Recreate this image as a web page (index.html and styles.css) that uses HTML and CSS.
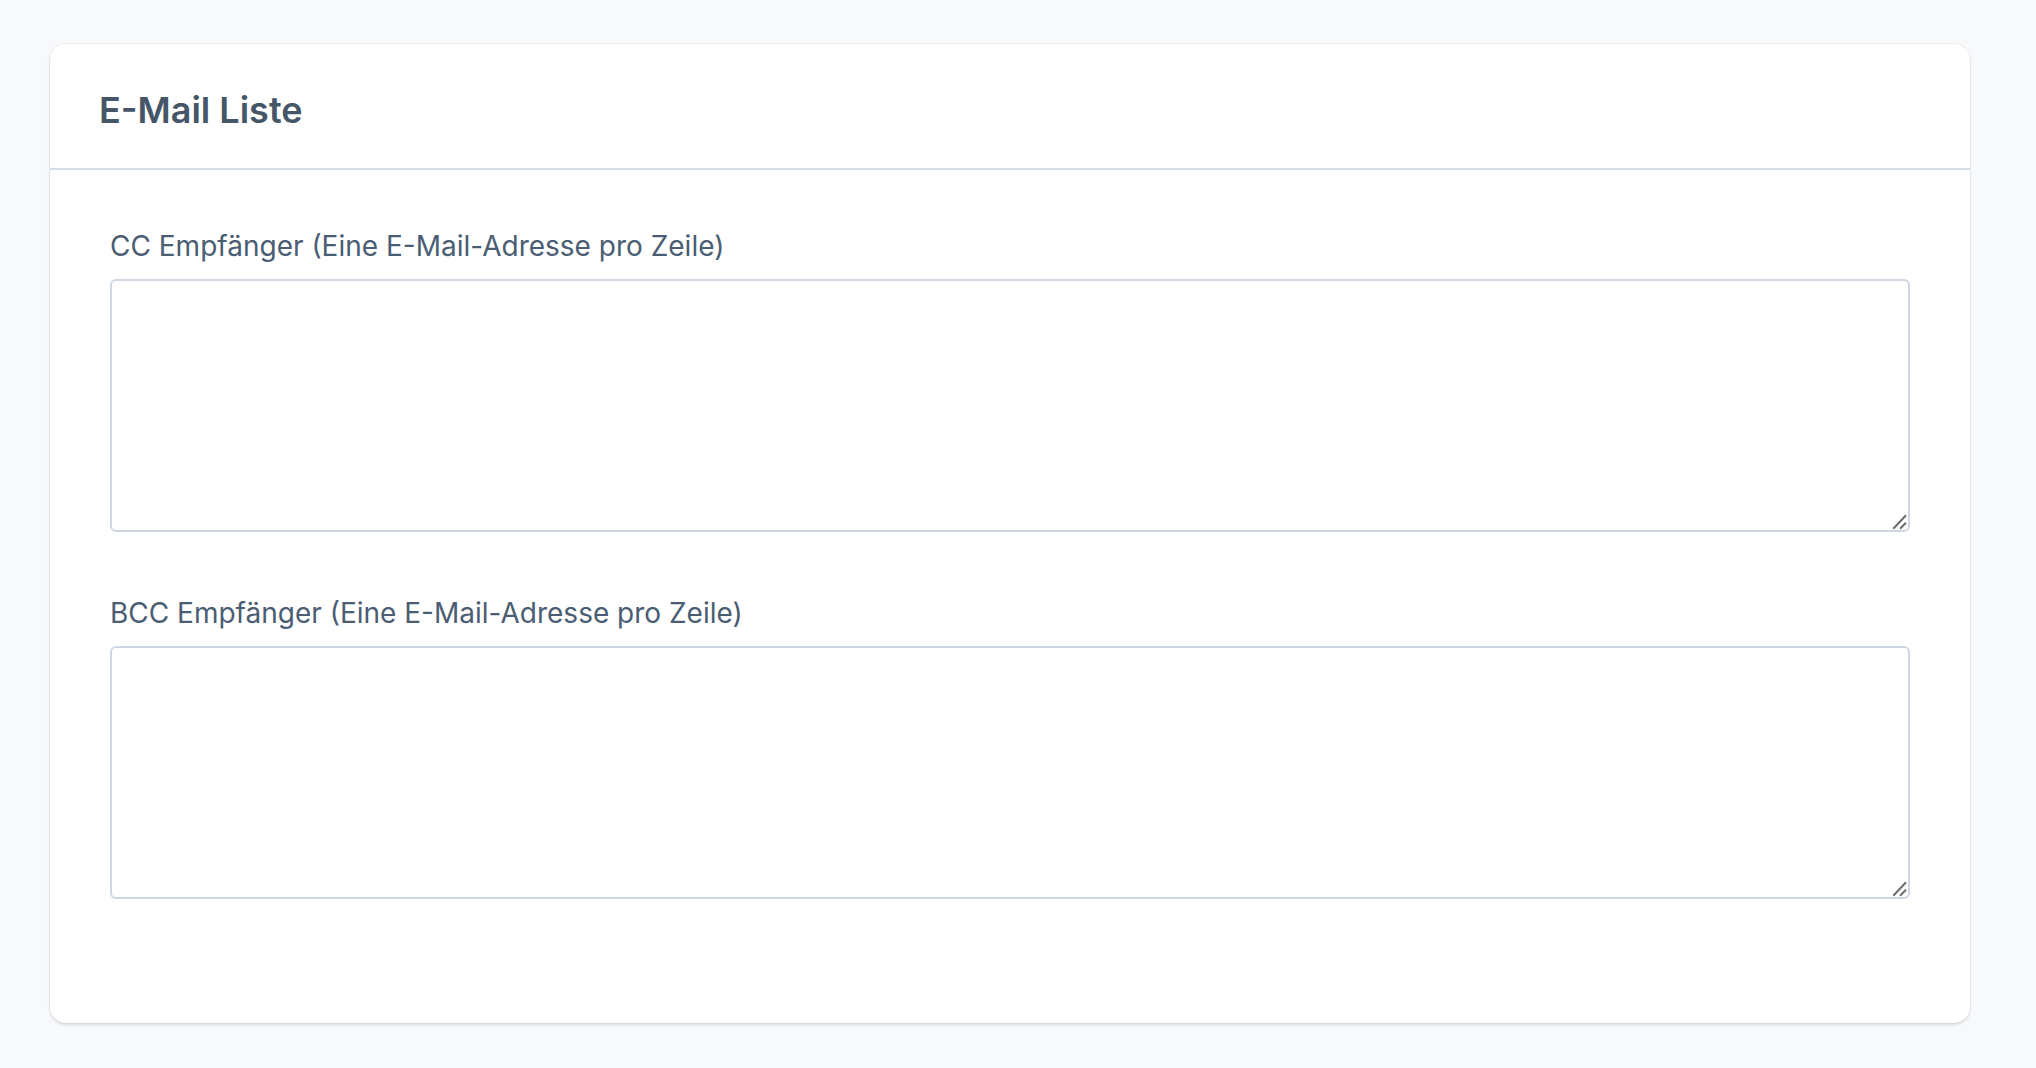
FILE: index.html
```html
<!DOCTYPE html>
<html lang="de">
<head>
<meta charset="utf-8">
<title>E-Mail Liste</title>
<link rel="stylesheet" href="styles.css">
</head>
<body>
<section class="card">
  <header class="card-header">
    <h2 class="card-title">E-Mail Liste</h2>
  </header>
  <div class="card-body">
    <div class="field">
      <label class="field-label" for="cc">CC Empfänger (Eine E-Mail-Adresse pro Zeile)</label>
      <div class="input-wrap">
        <textarea id="cc" class="field-input"></textarea>
        <svg class="grip" width="20" height="20" viewBox="0 0 20 20" aria-hidden="true">
          <line x1="3.3" y1="16.7" x2="16" y2="3.3" />
          <line x1="10" y1="16.7" x2="16" y2="10.7" />
        </svg>
      </div>
    </div>
    <div class="field">
      <label class="field-label" for="bcc">BCC Empfänger (Eine E-Mail-Adresse pro Zeile)</label>
      <div class="input-wrap">
        <textarea id="bcc" class="field-input"></textarea>
        <svg class="grip" width="20" height="20" viewBox="0 0 20 20" aria-hidden="true">
          <line x1="3.3" y1="16.7" x2="16" y2="3.3" />
          <line x1="10" y1="16.7" x2="16" y2="10.7" />
        </svg>
      </div>
    </div>
  </div>
</section>
</body>
</html>
```

FILE: styles.css
```css
html, body {
  margin: 0;
  padding: 0;
}
body {
  background: #f8f9fb;
  font-family: Inter, "Noto Sans", sans-serif;
  color: #475569;
  padding: 44px 66px 46px 50px;
}
.card {
  background: #ffffff;
  border-radius: 16px;
  box-shadow: 0 0 0 1px rgba(15, 23, 42, 0.04), 0 2px 3px rgba(15, 23, 42, 0.12);
}
.card-header {
  padding: 38px 48px 30px 49px;
  border-bottom: 2px solid #d3dde6;
}
.card-title {
  margin: 0;
  font-size: 36px;
  line-height: 56px;
  font-weight: 600;
  color: #455669;
}
.card-body {
  padding: 56px 60px 124px 60px;
  display: flex;
  flex-direction: column;
  gap: 61px;
}
.field {
  display: flex;
  flex-direction: column;
}
.field-label {
  font-size: 28px;
  line-height: 40px;
  font-weight: 400;
  color: #4a5d73;
  margin-bottom: 13px;
}
.input-wrap {
  position: relative;
}
.field-input {
  display: block;
  box-sizing: border-box;
  width: 100%;
  height: 253px;
  margin: 0;
  border: 2px solid #cfd8e2;
  border-radius: 6px;
  background: #ffffff;
  font-family: Inter, sans-serif;
  font-size: 28px;
  padding: 12px 16px;
  outline: none;
  resize: none;
}
.grip {
  position: absolute;
  right: 0;
  bottom: 0;
  pointer-events: none;
}
.grip line {
  stroke: #6b6b6b;
  stroke-width: 2;
  stroke-linecap: butt;
}
```
